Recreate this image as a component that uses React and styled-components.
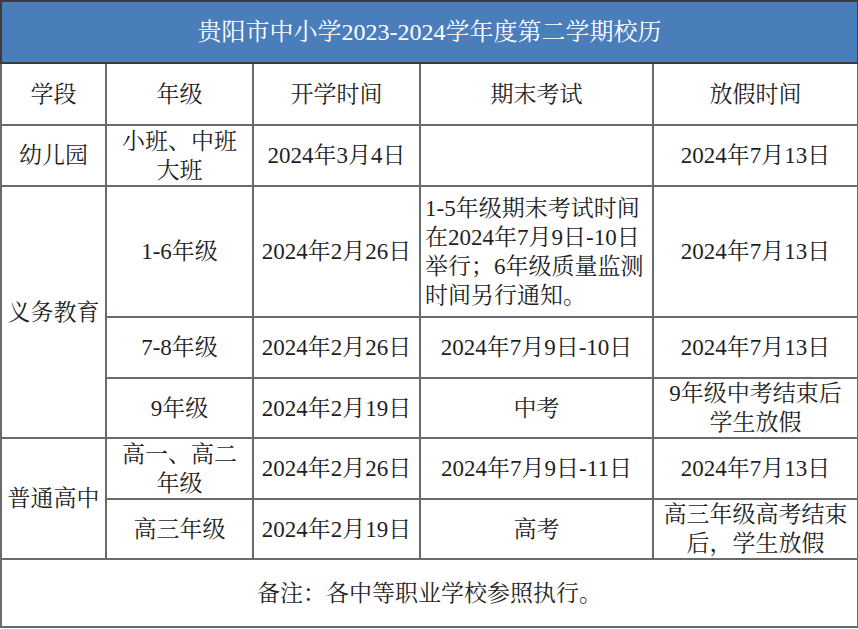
import React from "react";
import styled, { createGlobalStyle } from "styled-components";

const FONT = `"Times New Roman", "Liberation Serif", "DejaVu Serif", "Noto Serif CJK SC", "Noto Sans CJK SC", serif`;

const Global = createGlobalStyle`
  html, body { margin: 0; padding: 0; background: #ffffff; }
  body {
    font-family: ${FONT};
    color: #1f1f1f;
  }
`;

const Table = styled.table`
  width: 857px;
  table-layout: fixed;
  border-collapse: collapse;
  font-family: ${FONT};
  font-size: 23px;
  line-height: 29px;
  color: #1f1f1f;
`;

const TitleCell = styled.th`
  height: 60px;
  padding: 0;
  background: #4a7ebb;
  color: #ffffff;
  font-family: inherit;
  font-weight: 400;
  font-size: 24px;
  text-align: center;
  vertical-align: middle;
  border: 2px solid #3c3c3c;
`;

const Row = styled.tr`
  height: ${(p) => p.$h}px;
`;

const Cell = styled.td`
  padding: 0 4px;
  border: 2px solid #6a6a6a;
  font-family: inherit;
  text-align: ${(p) => (p.$left ? "left" : "center")};
  vertical-align: middle;
  white-space: nowrap;
  font-weight: 400;
`;

const HeadCell = styled(Cell).attrs({ as: "th" })``;

const cols = [105, 147, 167, 233, 205];

export default function App() {
  return (
    <>
      <Global />
      <Table>
        <colgroup>
          {cols.map((w, i) => (
            <col key={i} style={{ width: w }} />
          ))}
        </colgroup>
        <thead>
          <tr>
            <TitleCell colSpan={5}>贵阳市中小学2023-2024学年度第二学期校历</TitleCell>
          </tr>
          <Row $h={62}>
            <HeadCell>学段</HeadCell>
            <HeadCell>年级</HeadCell>
            <HeadCell>开学时间</HeadCell>
            <HeadCell>期末考试</HeadCell>
            <HeadCell>放假时间</HeadCell>
          </Row>
        </thead>
        <tbody>
          <Row $h={61}>
            <Cell>幼儿园</Cell>
            <Cell>
              小班、中班
              <br />
              大班
            </Cell>
            <Cell>2024年3月4日</Cell>
            <Cell></Cell>
            <Cell>2024年7月13日</Cell>
          </Row>
          <Row $h={131}>
            <Cell rowSpan={3}>义务教育</Cell>
            <Cell>1-6年级</Cell>
            <Cell>2024年2月26日</Cell>
            <Cell $left>
              1-5年级期末考试时间
              <br />
              在2024年7月9日-10日
              <br />
              举行；6年级质量监测
              <br />
              时间另行通知。
            </Cell>
            <Cell>2024年7月13日</Cell>
          </Row>
          <Row $h={61}>
            <Cell>7-8年级</Cell>
            <Cell>2024年2月26日</Cell>
            <Cell>2024年7月9日-10日</Cell>
            <Cell>2024年7月13日</Cell>
          </Row>
          <Row $h={60}>
            <Cell>9年级</Cell>
            <Cell>2024年2月19日</Cell>
            <Cell>中考</Cell>
            <Cell>
              9年级中考结束后
              <br />
              学生放假
            </Cell>
          </Row>
          <Row $h={61}>
            <Cell rowSpan={2}>普通高中</Cell>
            <Cell>
              高一、高二
              <br />
              年级
            </Cell>
            <Cell>2024年2月26日</Cell>
            <Cell>2024年7月9日-11日</Cell>
            <Cell>2024年7月13日</Cell>
          </Row>
          <Row $h={60}>
            <Cell>高三年级</Cell>
            <Cell>2024年2月19日</Cell>
            <Cell>高考</Cell>
            <Cell>
              高三年级高考结束
              <br />
              后，学生放假
            </Cell>
          </Row>
          <Row $h={68}>
            <Cell colSpan={5}>备注：各中等职业学校参照执行。</Cell>
          </Row>
        </tbody>
      </Table>
    </>
  );
}
